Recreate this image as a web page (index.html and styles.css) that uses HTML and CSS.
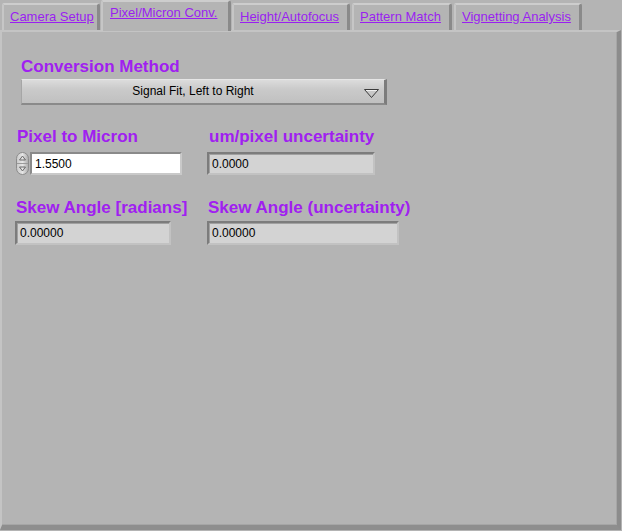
FILE: index.html
```html
<!DOCTYPE html>
<html>
<head>
<meta charset="utf-8">
<link rel="stylesheet" href="styles.css">
</head>
<body>
<div class="window">
  <div class="tabs">
    <div class="tab t1"><span>Camera Setup</span></div>
    <div class="tab t2 active"><span>Pixel/Micron Conv.</span></div>
    <div class="tab t3"><span>Height/Autofocus</span></div>
    <div class="tab t4"><span>Pattern Match</span></div>
    <div class="tab t5"><span>Vignetting Analysis</span></div>
  </div>
  <div class="panel">
    <div class="method">
      <div class="label">Conversion Method</div>
      <div class="ring">
        <span class="ring-text">Signal Fit, Left to Right</span>
        <svg class="ring-arrow" width="17" height="11" viewBox="0 0 17 11"><path d="M1.5 1.5 H15.5 L8.5 9.5 Z" fill="none" stroke="#3a3a3a" stroke-width="1"/><path d="M3 2.5 H14" stroke="#f0f0f0" stroke-width="1"/></svg>
      </div>
    </div>
    <div class="grid">
      <div class="field">
        <div class="label">Pixel to Micron</div>
        <div class="numeric">
          <div class="spin">
            <svg width="13" height="23" viewBox="0 0 13 23">
              <defs><linearGradient id="sg" x1="0" y1="0" x2="1" y2="0"><stop offset="0" stop-color="#c8c8c8"/><stop offset="0.5" stop-color="#e6e6e6"/><stop offset="1" stop-color="#a8a8a8"/></linearGradient></defs>
              <rect x="0.5" y="0.5" width="12" height="22" rx="6" fill="url(#sg)" stroke="#8c8c8c"/>
              <line x1="1" y1="11.5" x2="12" y2="11.5" stroke="#9a9a9a"/>
              <path d="M3.5 8 L6.5 4 L9.5 8 Z" fill="none" stroke="#6a6a6a"/>
              <path d="M3.5 15 L6.5 19 L9.5 15 Z" fill="none" stroke="#6a6a6a"/>
            </svg>
          </div>
          <div class="box input w1">1.5500</div>
        </div>
      </div>
      <div class="field">
        <div class="label">um/pixel uncertainty</div>
        <div class="box ind w2">0.0000</div>
      </div>
      <div class="field row2">
        <div class="label">Skew Angle [radians]</div>
        <div class="box ind w3 shift">0.00000</div>
      </div>
      <div class="field row2">
        <div class="label">Skew Angle (uncertainty)</div>
        <div class="box ind w4">0.00000</div>
      </div>
    </div>
  </div>
</div>
</body>
</html>
```

FILE: styles.css
```css
html, body {
  margin: 0;
  padding: 0;
  background: #b4b4b4;
  font-family: "Liberation Sans", Arial, sans-serif;
}
.window {
  width: 622px;
  height: 531px;
  background: #b4b4b4;
  position: relative;
  overflow: hidden;
}
.tabs {
  display: flex;
  align-items: flex-end;
  height: 30px;
  padding-left: 2px;
  gap: 1px;
  position: relative;
  z-index: 2;
}
.tab {
  box-sizing: border-box;
  height: 27px;
  background: #b4b4b4;
  border-top: 2px solid #cdcdcd;
  border-left: 2px solid #c6c6c6;
  border-right: 3px solid #8a8a8a;
  border-top-left-radius: 2px;
  border-top-right-radius: 3px;
  font-size: 13px;
  color: #9a1ff0;
  padding-left: 6px;
  padding-top: 4px;
}
.tab span {
  text-decoration: underline;
  text-underline-offset: 1px;
}
.t1 { width: 98px; }
.t2 { width: 130px; }
.t3 { width: 118px; margin-left: 0; }
.t4 { width: 100px; margin-left: 1px; }
.t5 { width: 128px; margin-left: 1px; }
.tab.active {
  height: 31px;
  margin-bottom: -1px;
  padding-top: 3px;
  padding-left: 7px;
  border-bottom: none;
}
.t3, .t4, .t5 { padding-left: 6px; }
.panel {
  box-sizing: border-box;
  width: 621px;
  height: 500px;
  background: #b4b4b4;
  border-top: 2px solid #c4c4c4;
  border-left: 2px solid #c4c4c4;
  border-right: 4px solid #8c8c8c;
  border-bottom: 5px solid #8e8e8e;
  box-shadow: inset -1px -1px 0 #a6a6a6;
  padding-top: 26px;
  padding-left: 14px;
}
.label {
  font-weight: bold;
  font-size: 17px;
  line-height: 18px;
  height: 18px;
  color: #a020f0;
  white-space: nowrap;
}
.method {
  margin-left: 5px;
}
.ring {
  box-sizing: border-box;
  margin-top: 3px;
  width: 366px;
  height: 26px;
  display: flex;
  align-items: center;
  justify-content: center;
  position: relative;
  background: linear-gradient(#dcdcdc, #cacaca 40%, #c0c0c0);
  border-top: 1px solid #e6e6e6;
  border-left: 1px solid #a6a6a6;
  border-right: 3px solid #7c7c7c;
  border-bottom: 2px solid #8a8a8a;
  font-size: 12px;
  color: #000;
}
.ring-text {
  margin-left: -20px;
  margin-top: -2px;
}
.ring-arrow {
  position: absolute;
  right: 4px;
  top: 8px;
}
.grid {
  display: grid;
  grid-template-columns: 192px auto;
  margin-top: 23px;
  row-gap: 24px;
}
.field .label { margin-left: 1px; }
.numeric {
  display: flex;
  align-items: center;
  margin-top: 6px;
  gap: 1px;
}
.spin {
  width: 13px;
  height: 23px;
  display: flex;
}
.box {
  box-sizing: border-box;
  height: 23px;
  font-size: 12px;
  line-height: 20px;
  padding-left: 3px;
  color: #000;
}
.input {
  background: #ffffff;
  border-top: 2px solid #8a8a8a;
  border-left: 2px solid #8a8a8a;
  border-right: 2px solid #c9c9c9;
  border-bottom: 2px solid #c9c9c9;
}
.ind {
  background: #d3d3d3;
  border-top: 2px solid #7c7c7c;
  border-left: 2px solid #7c7c7c;
  border-right: 2px solid #c2c2c2;
  border-bottom: 2px solid #c2c2c2;
  box-shadow: inset 1px 1px 0 #a0a0a0;
  margin-top: 6px;
  margin-left: -1px;
}
.row2 .ind {
  height: 24px;
  margin-top: 4px;
  line-height: 20px;
}
.w1 { width: 152px; }
.w2 { width: 168px; }
.w3 { width: 156px; }
.w4 { width: 192px; }
.row2 .label { margin-left: 0; }
```
